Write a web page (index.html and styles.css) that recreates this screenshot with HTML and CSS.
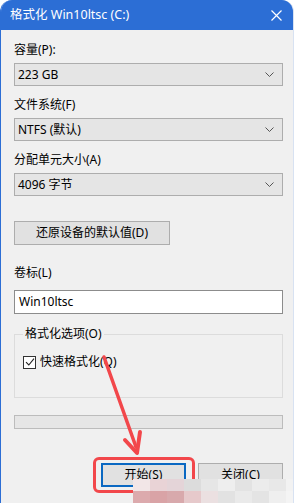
FILE: index.html
```html
<!DOCTYPE html>
<html>
<head>
    <title>格式化 Win10ltsc (C:)</title>
    <link rel="stylesheet" href="styles.css">
</head>
<body>
    <div class="window">
        <div class="titlebar">
            <span class="title">格式化 Win10ltsc (C:)</span>
            <svg class="close" width="11" height="11" viewBox="0 0 11 11">
                <path d="M0.5 0.5 L10.5 10.5 M10.5 0.5 L0.5 10.5" stroke="#fff" stroke-width="1.2" fill="none"/>
            </svg>
        </div>

        <div class="content">
            <div class="label first">容量(P):</div>
            <div class="combo">
                <span>223 GB</span>
                <svg class="chevron" width="9" height="5" viewBox="0 0 9 5"><path d="M0.5 0.5 L4.5 4.5 L8.5 0.5" stroke="#555" fill="none"/></svg>
            </div>

            <div class="label">文件系统(F)</div>
            <div class="combo">
                <span>NTFS (默认)</span>
                <svg class="chevron" width="9" height="5" viewBox="0 0 9 5"><path d="M0.5 0.5 L4.5 4.5 L8.5 0.5" stroke="#555" fill="none"/></svg>
            </div>

            <div class="label">分配单元大小(A)</div>
            <div class="combo">
                <span>4096 字节</span>
                <svg class="chevron" width="9" height="5" viewBox="0 0 9 5"><path d="M0.5 0.5 L4.5 4.5 L8.5 0.5" stroke="#555" fill="none"/></svg>
            </div>

            <div class="btn restore">还原设备的默认值(D)</div>

            <div class="label volume">卷标(L)</div>
            <div class="textbox">Win10ltsc</div>

            <fieldset class="options">
                <legend>格式化选项(O)</legend>
                <div class="check-row">
                    <span class="checkbox">
                        <svg width="10" height="10" viewBox="0 0 10 10"><path d="M1 5.2 L3.8 8 L9 1.6" stroke="#222" stroke-width="1.1" fill="none"/></svg>
                    </span>
                    <span>快速格式化(Q)</span>
                </div>
            </fieldset>

            <div class="progress"></div>

            <div class="actions">
                <div class="highlight">
                    <div class="btn primary">开始(S)</div>
                </div>
                <div class="btn">关闭(C)</div>
            </div>
        </div>

        <!-- annotation arrow over the dialog -->
        <svg class="arrow" width="297" height="503" viewBox="0 0 297 503">
            <path d="M104 357 L136 447" stroke="#f2474b" stroke-width="3.5" stroke-linecap="round" fill="none"/>
            <path d="M125 440 L137 453 L140 432" stroke="#f2474b" stroke-width="4" stroke-linecap="round" stroke-linejoin="round" fill="none"/>
        </svg>

        <!-- blurred watermark -->
        <div class="mosaic">
            <div class="mrow">
                <span style="background:#f2e6e7"></span>
                <span style="background:#e9d3d6"></span>
                <span style="background:#e4d4d8"></span>
                <span style="background:#dcdcdc"></span>
                <span style="background:#e6e6e6"></span>
                <span style="background:#eeeeee"></span>
                <span style="background:#e3e3e3"></span>
                <span style="background:#ececec"></span>
                <span style="background:#e8e8e8"></span>
                <span style="background:#f2f2f2"></span>
            </div>
            <div class="mrow">
                <span style="background:#dcaaad"></span>
                <span style="background:#d9a3a6"></span>
                <span style="background:#d8a9ac"></span>
                <span style="background:#e6c9cb"></span>
                <span style="background:#ebe0e1"></span>
                <span style="background:#e2e2e2"></span>
                <span style="background:#eaeaea"></span>
                <span style="background:#e4e4e4"></span>
                <span style="background:#efefef"></span>
                <span style="background:#f4f4f4"></span>
            </div>
        </div>
    </div>
</body>
</html>
```

FILE: styles.css
```css
body {
    margin: 0;
    background: #fff;
    font-family: "Noto Sans", "Noto Sans CJK SC", sans-serif;
    font-size: 12px;
    color: #000;
}

.window {
    position: relative;
    width: 292px;
    height: 503px;
    background: #f0f0f0;
    border-left: 1px solid #2c6ed5;
    border-right: 1px solid #d8e2f2;
    border-radius: 12px 12px 0 0;
    overflow: hidden;
}

.titlebar {
    height: 30px;
    background: #2c6ed5;
    display: flex;
    align-items: center;
    justify-content: space-between;
    padding: 0 11px 0 9px;
    color: #fff;
}

.title {
    font-size: 12.5px;
    line-height: 18px;
}

.content {
    padding: 0 10px 0 13px;
}

.label {
    line-height: 18px;
    margin-top: 10px;
}

.label.first {
    margin-top: 11px;
}

.label.volume {
    margin-top: 19px;
}

.combo {
    margin-top: 4px;
    height: 21px;
    border: 1px solid #adadad;
    background: #e5e5e5;
    display: flex;
    align-items: center;
    justify-content: space-between;
    padding: 0 8px 0 3px;
    line-height: 18px;
}

.btn {
    height: 22px;
    border: 1px solid #adadad;
    background: #e1e1e1;
    display: flex;
    align-items: center;
    justify-content: center;
    line-height: 18px;
}

.restore {
    margin-top: 25px;
    width: 154px;
}

.textbox {
    margin-top: 8px;
    height: 22px;
    border: 1px solid #8c8c8c;
    background: #fff;
    padding: 0 4px;
    line-height: 22px;
}

.options {
    margin: 11px 0 0 0;
    padding: 0 5px 26px 8px;
    border: 1px solid #dcdcdc;
    min-width: 0;
}

.options legend {
    padding: 0 2px;
    line-height: 18px;
}

.check-row {
    margin-top: 10px;
    display: flex;
    align-items: center;
    gap: 4px;
    line-height: 18px;
}

.checkbox {
    width: 11px;
    height: 11px;
    border: 1px solid #333;
    background: #fff;
    display: flex;
    align-items: center;
    justify-content: center;
}

.progress {
    margin-top: 17px;
    height: 12px;
    border: 1px solid #bcbcbc;
    background: #e6e6e6;
}

.actions {
    margin-top: 34px;
    display: flex;
    justify-content: flex-end;
    gap: 12px;
}

.actions .btn {
    width: 83px;
}

.highlight {
    position: relative;
}

.highlight::after {
    content: "";
    position: absolute;
    top: -6px;
    bottom: -6px;
    left: -8px;
    right: -9px;
    border: 3px solid #f2474b;
    border-radius: 6px;
}

.btn.primary {
    width: 81px;
    height: 20px;
    border: 2px solid #0a68c2;
}

.arrow {
    position: absolute;
    left: -1px;
    top: 0;
}

.mosaic {
    position: absolute;
    left: 132px;
    top: 479px;
    display: flex;
    flex-direction: column;
}

.mrow {
    display: flex;
}

.mrow span {
    width: 17px;
    height: 12px;
}
```
